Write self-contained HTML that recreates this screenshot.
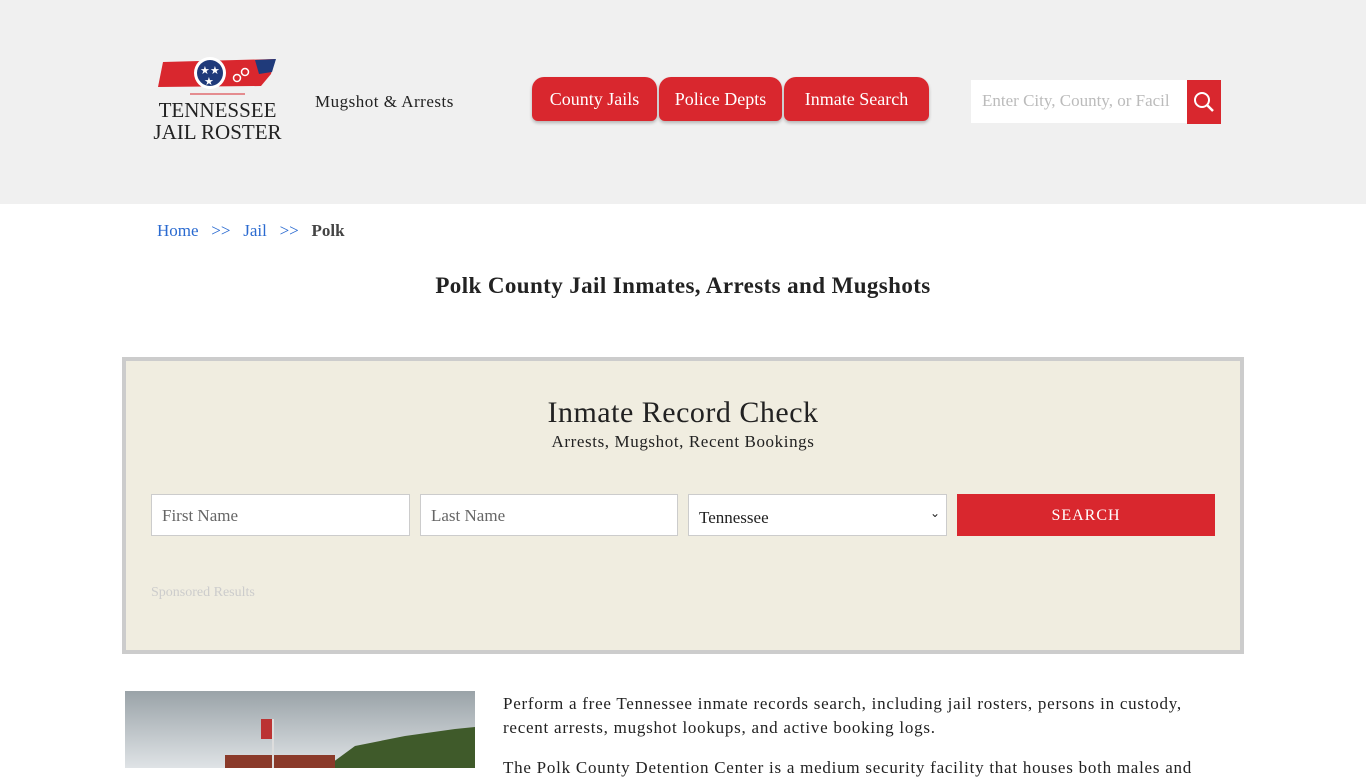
<!DOCTYPE html>
<html><head><meta charset="utf-8"><style>
*{margin:0;padding:0;box-sizing:border-box}
body{width:1366px;height:768px;overflow:hidden;background:#fff;font-family:"Liberation Serif","DejaVu Serif",serif;color:#222}
.hdr{position:absolute;left:0;top:0;width:1366px;height:204px;background:#f0f0f0}
.tab{position:absolute;top:77px;height:44px;background:#d9272e;color:#fff;font-size:18px;border-radius:12px 12px 6px 6px;text-align:center;line-height:44px;box-shadow:0 2px 3px rgba(0,0,0,.25)}
.box{position:absolute;left:122px;top:357px;width:1122px;height:297px;background:#f0ede0;border:4px solid #ccc}
.inp{position:absolute;top:494px;height:42px;background:#fff;border:1px solid #ccc;font-size:17px;color:#666;padding:11px 10px}
</style></head><body>
<div class="hdr">
<svg style="position:absolute;left:155px;top:56px" width="125" height="44" viewBox="0 0 125 44">
<path d="M8 6 L120 3 L116 18 L106 30 L3 31 Z" fill="#d9272e"/>
<path d="M100 4 L121 3 L117 16 L104 18 Z" fill="#1f3a7a"/>
<circle cx="55" cy="17" r="16" fill="#fff"/><circle cx="55" cy="17" r="13" fill="#1f3a7a"/>
<text x="45" y="18" fill="#fff" font-size="11">★</text><text x="55" y="18" fill="#fff" font-size="11">★</text><text x="49" y="29" fill="#fff" font-size="11">★</text>
<circle cx="82" cy="22" r="3.5" fill="none" stroke="#fff" stroke-width="1.5"/><circle cx="90" cy="16" r="3.5" fill="none" stroke="#fff" stroke-width="1.5"/>
<line x1="35" y1="38" x2="90" y2="38" stroke="#d9272e" stroke-width="1"/>
</svg>
<div style="position:absolute;left:150px;top:99px;width:135px;text-align:center;font-size:21px;line-height:22px;color:#222;white-space:nowrap">TENNESSEE<br>JAIL ROSTER</div>
<div style="position:absolute;left:315px;top:92px;font-size:17px;letter-spacing:0.5px">Mugshot &amp; Arrests</div>
<div class="tab" style="left:532px;width:125px">County Jails</div>
<div class="tab" style="left:659px;width:123px">Police Depts</div>
<div class="tab" style="left:784px;width:145px">Inmate Search</div>
<div style="position:absolute;left:971px;top:80px;width:217px;height:43px;background:#fff;color:#bbb;font-size:17px;padding:11px 11px;white-space:nowrap;overflow:hidden">Enter City, County, or Facil</div>
<div style="position:absolute;left:1187px;top:80px;width:34px;height:44px;background:#d9272e">
<svg width="34" height="44"><circle cx="15" cy="20" r="7" fill="none" stroke="#fff" stroke-width="2"/><line x1="20" y1="25" x2="26" y2="31" stroke="#fff" stroke-width="2.5"/></svg></div>
</div>
<div style="position:absolute;left:157px;top:221px;font-size:17px;color:#2a6ad0">Home &nbsp;&nbsp;&gt;&gt;&nbsp;&nbsp; Jail &nbsp;&nbsp;&gt;&gt;&nbsp;&nbsp; <b style="color:#444">Polk</b></div>
<div style="position:absolute;left:0;width:1366px;top:273px;text-align:center;font-size:23px;font-weight:bold;color:#222;letter-spacing:0.4px">Polk County Jail Inmates, Arrests and Mugshots</div>
<div class="box"></div>
<div style="position:absolute;left:0;width:1366px;top:396px;text-align:center;font-size:30px;letter-spacing:0.5px">Inmate Record Check</div>
<div style="position:absolute;left:0;width:1366px;top:432px;text-align:center;font-size:17px;letter-spacing:0.6px">Arrests, Mugshot, Recent Bookings</div>
<div class="inp" style="left:151px;width:259px">First Name</div>
<div class="inp" style="left:420px;width:258px">Last Name</div>
<div class="inp" style="left:688px;width:259px;color:#222;padding-top:13px">Tennessee<span style="position:absolute;right:6px;top:11px;font-size:12px">&#8964;</span></div>
<div style="position:absolute;left:957px;top:494px;width:258px;height:42px;background:#d9272e;color:#fff;text-align:center;line-height:44px;font-size:16px;letter-spacing:1px">SEARCH</div>
<div style="position:absolute;left:151px;top:585px;font-size:14px;color:#ccc">Sponsored Results</div>
<svg style="position:absolute;left:125px;top:691px" width="350" height="77">
<defs><linearGradient id="s" x1="0" y1="0" x2="0" y2="1"><stop offset="0" stop-color="#9aa3a8"/><stop offset="1" stop-color="#dfe3e6"/></linearGradient></defs>
<rect width="350" height="77" fill="url(#s)"/>
<path d="M200 77 L230 55 L280 45 L330 38 L350 36 L350 77Z" fill="#3f5a2a"/>
<rect x="100" y="64" width="110" height="13" fill="#8a3a2a"/>
<line x1="148" y1="28" x2="148" y2="77" stroke="#ddd" stroke-width="2"/>
<rect x="136" y="28" width="11" height="20" fill="#b33"/>
</svg>
<div style="position:absolute;left:503px;top:692px;width:700px;font-size:17px;line-height:24px;letter-spacing:0.75px">Perform a free Tennessee inmate records search, including jail rosters, persons in custody, recent arrests, mugshot lookups, and active booking logs.</div>
<div style="position:absolute;left:503px;top:756px;width:700px;font-size:17px;line-height:24px;white-space:nowrap;letter-spacing:0.75px">The Polk County Detention Center is a medium security facility that houses both males and</div>
</body></html>
